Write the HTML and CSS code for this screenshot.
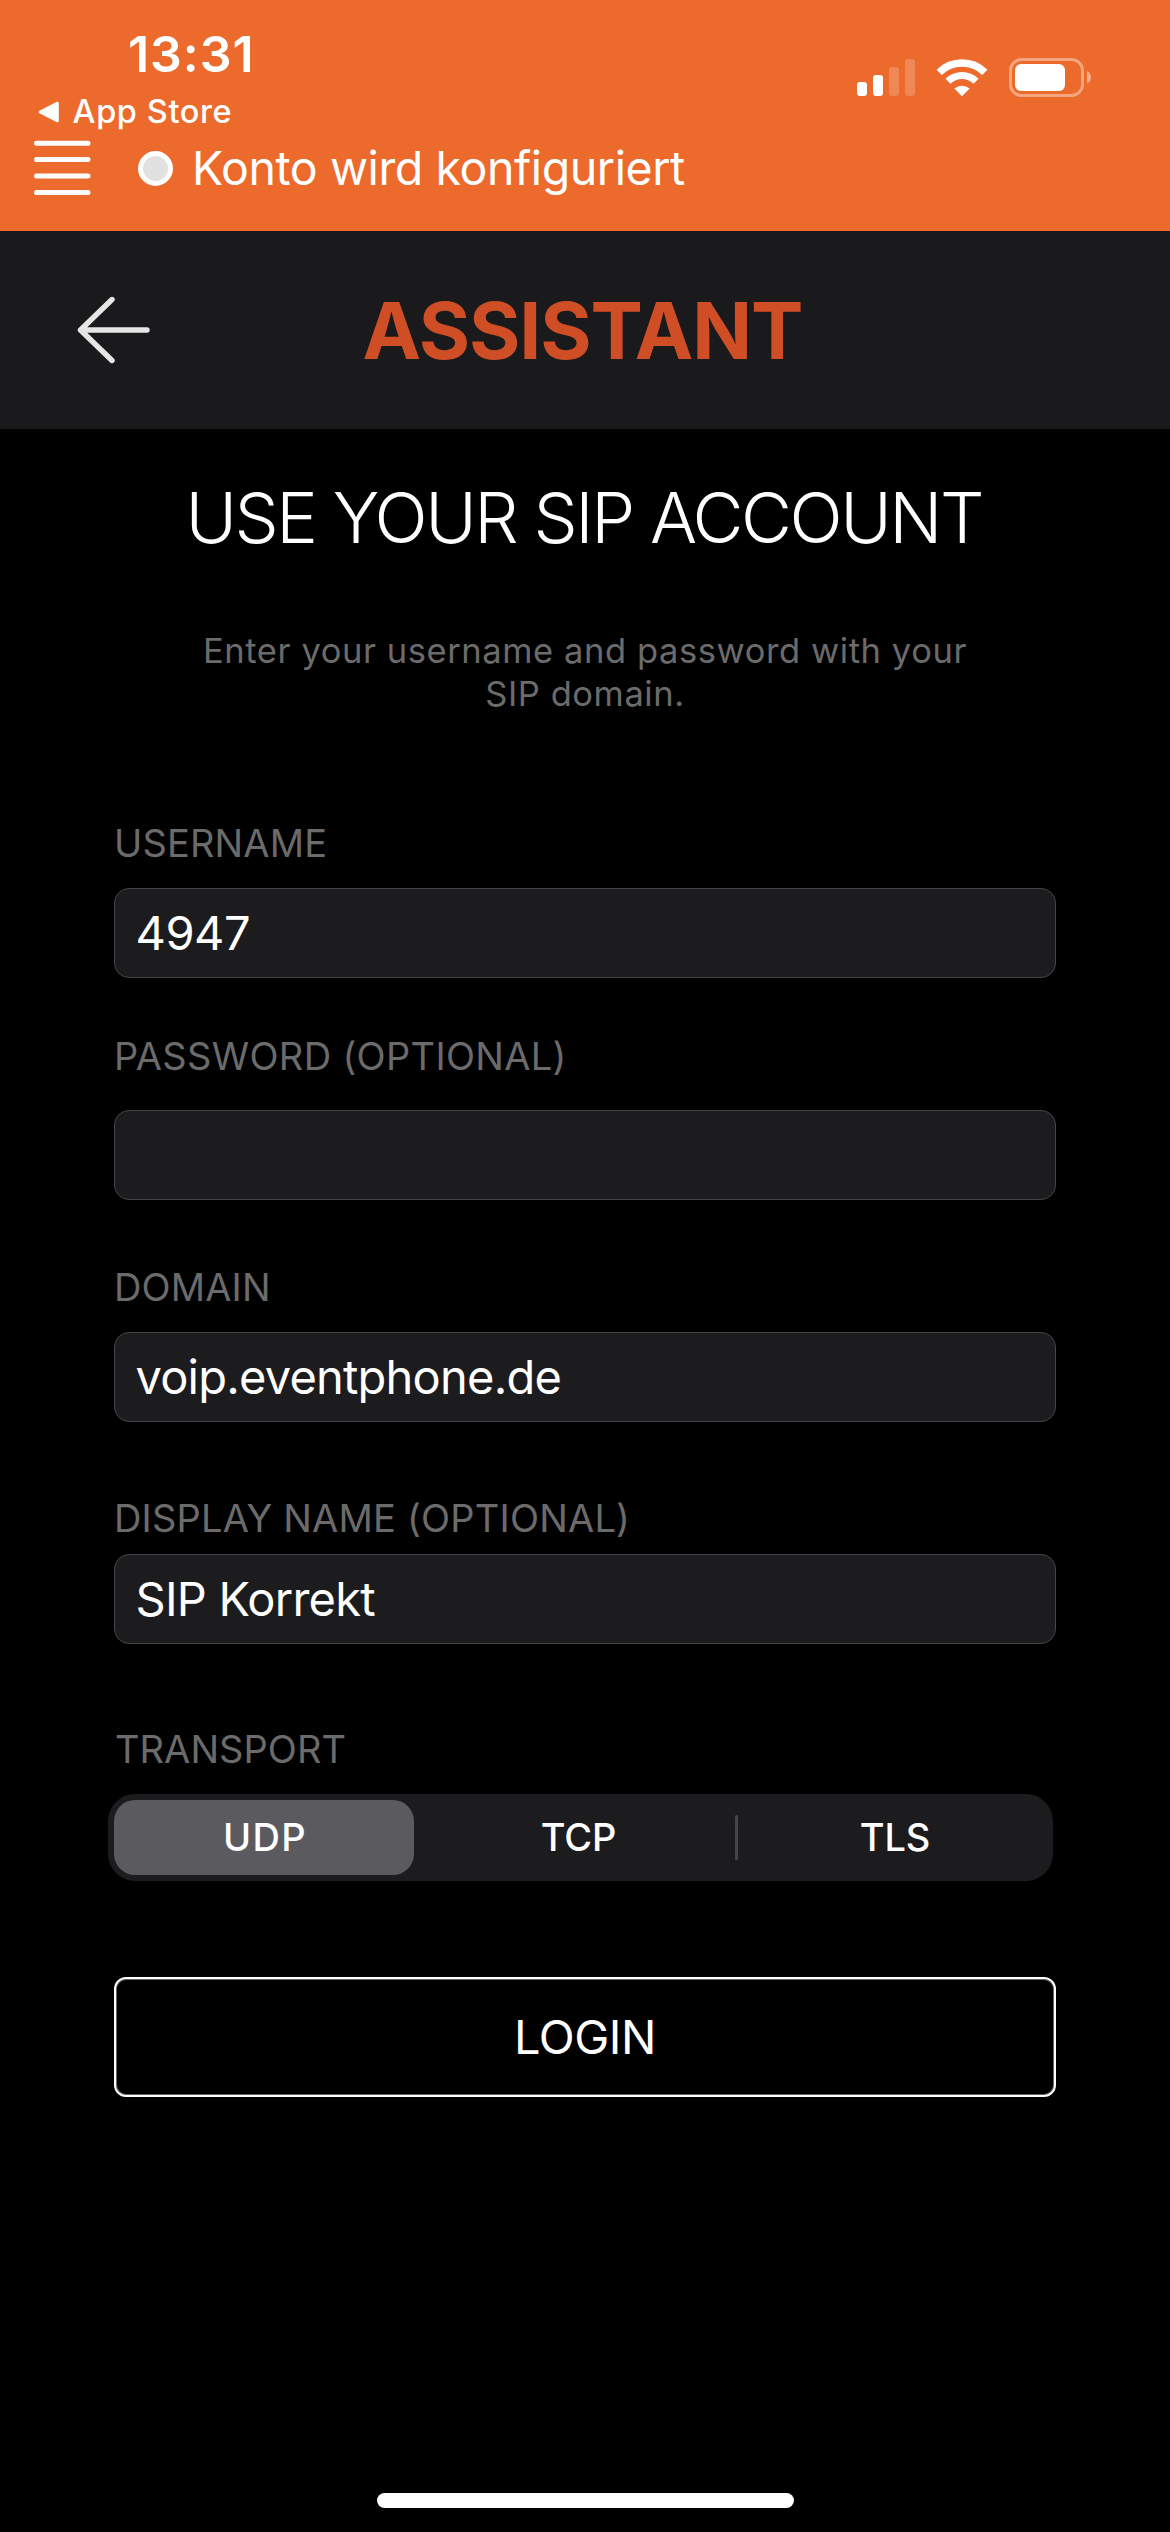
FILE: index.html
```html
<!DOCTYPE html>
<html lang="de">
<head>
<meta charset="utf-8">
<title>Assistant</title>
<link rel="stylesheet" href="styles.css">
</head>
<body>
<div class="screen">
  <header class="top">
    <div class="status">
      <div class="status-left">
        <div class="clock">13:31</div>
        <div class="back-app">
          <svg class="back-triangle" width="22" height="22" viewBox="0 0 22 22"><path d="M2 11 19.5 2V20Z" fill="#fff" stroke="#fff" stroke-width="2.6" stroke-linejoin="round"/></svg>
          <span>App Store</span>
        </div>
      </div>
      <div class="status-right">
        <svg width="58" height="37" viewBox="0 0 58 37" fill="#fff"><rect y="23" width="10" height="14" rx="3"/><rect x="16" y="16" width="10" height="21" rx="3"/><g opacity=".2"><rect x="32" y="8" width="10" height="29" rx="3"/><rect x="48" width="10" height="37" rx="3"/></g></svg>
        <svg class="wifi" width="52" height="38" viewBox="0 0 52 38" fill="none" stroke="#fff"><path d="M3.2 13.3A32.5 32.5 0 0 1 48.8 13.3" stroke-width="7.5"/><path d="M12 22.2A20 20 0 0 1 40 22.2" stroke-width="7.2"/><path d="M26 37.2 18.4 29.5A11.5 11.5 0 0 1 33.6 29.5Z" fill="#fff" stroke="none"/></svg>
        <svg width="82" height="39" viewBox="0 0 82 39"><rect x="1.5" y="1.5" width="72" height="36" rx="11" fill="none" stroke="#fff" stroke-opacity=".4" stroke-width="3"/><rect x="6" y="6" width="50" height="27" rx="6" fill="#fff"/><path d="M78 13.2C80.6 14.3 82 16.6 82 19.3S80.6 24.5 78 25.6Z" fill="#fff" fill-opacity=".45"/></svg>
      </div>
    </div>
    <div class="account">
      <svg class="menu" width="58" height="56" viewBox="0 0 58 56" stroke="#fff" stroke-width="5" stroke-linecap="round"><path d="M3.5 3.2H55M3.5 19.6H55M3.5 35.9H55M3.5 52.4H55"/></svg>
      <span class="dot"></span>
      <span class="account-text">Konto wird konfiguriert</span>
    </div>
  </header>
  <nav class="nav">
    <svg class="arrow" width="74" height="68" viewBox="0 0 74 68" fill="none" stroke="#e6e6e6" stroke-width="5.4" stroke-linecap="round" stroke-linejoin="round"><path d="M36 3.5 4.5 34 36 64.5M4.5 34H71"/></svg>
    <h1 class="title">ASSISTANT</h1>
  </nav>
  <main class="content">
    <h2 class="heading">USE YOUR SIP ACCOUNT</h2>
    <p class="intro">Enter your username and password with your<br>SIP domain.</p>
    <div class="form">
      <div class="label label-username">USERNAME</div>
      <div class="field field-number">4947</div>
      <div class="label label-password">PASSWORD (OPTIONAL)</div>
      <div class="field"></div>
      <div class="label label-domain">DOMAIN</div>
      <div class="field">voip.eventphone.de</div>
      <div class="label label-display">DISPLAY NAME (OPTIONAL)</div>
      <div class="field">SIP Korrekt</div>
      <div class="label label-transport">TRANSPORT</div>
      <div class="segments">
        <div class="segment selected">UDP</div>
        <div class="segment middle">TCP</div>
        <div class="divider"></div>
        <div class="segment last">TLS</div>
      </div>
      <div class="login">LOGIN</div>
    </div>
  </main>
  <div class="home-bar"></div>
</div>
</body>
</html>
```
FILE: styles.css
```css
* { box-sizing: border-box; }
body { margin: 0; background: #000; }
.screen {
  width: 1170px; height: 2532px;
  display: flex; flex-direction: column;
  background: #000; color: #fff;
  font-family: Inter, "Liberation Sans", sans-serif;
  overflow: hidden;
  white-space: nowrap;
}
svg { display: block; flex: none; }

.top { height: 231px; flex: none; background: #ec6a2c; }
.status { height: 138px; display: flex; justify-content: space-between; }
.status-left { padding: 24px 0 0 38px; }
.clock { padding-left: 90px; line-height: 60px; font-size: 50px; font-weight: 600; letter-spacing: 0.95px; }
.back-app { display: flex; align-items: center; margin-top: 7px; line-height: 41px; font-size: 32.5px; font-weight: 500; letter-spacing: 0.6px; }
.back-app span { margin-left: 12.5px; }
.status-right { display: flex; align-items: flex-start; padding: 58px 79px 0 0; }
.status-right svg:first-child { margin-top: 1px; }
.wifi { margin: 1px 21px 0; }
.account { display: flex; align-items: center; height: 60px; padding-left: 33px; }
.menu { margin-top: -1px; }
.dot { width: 35px; height: 35px; margin: 0 19px 0 47px; flex: none; border: 5px solid #fff; border-radius: 50%; background: #e1e1e1; }
.account-text { font-size: 46.5px; font-weight: 400; letter-spacing: -0.42px; line-height: 60px; }

.nav { height: 198px; flex: none; display: flex; align-items: center; padding-left: 76px; background: #1a1a1c; }
.title { margin: 1px 0 0 212.5px; font-size: 78.5px; line-height: 100px; font-weight: 700; letter-spacing: -1.13px; color: #d04e25; }

.content { flex: 1; }
.heading { margin: 49px 0 0 185.5px; font-size: 70px; line-height: 80px; font-weight: 300; letter-spacing: -2.45px; }
.intro { margin: 71px 0 0; font-size: 34.5px; line-height: 43px; letter-spacing: 0.58px; text-align: center; color: #6b6b6b; }
.form { width: 942px; margin: 108px 0 0 114px; }
.label { height: 40px; line-height: 40px; font-size: 38px; letter-spacing: 0.15px; color: #6b6b6b; }
.label-username { margin-bottom: 25px; }
.label-password { margin: 58px 0 34px; letter-spacing: 0.32px; }
.label-domain { margin: 67px 0 25px; }
.label-display { margin: 76px 0 16px; letter-spacing: 0.2px; }
.label-transport { margin: 85px 0 25px; padding-left: 1px; letter-spacing: 0.06px; }
.field { height: 90px; padding-left: 20.5px; border: 1px solid #464648; border-radius: 15px; background: #1c1c1e; font-size: 47px; line-height: 88px; letter-spacing: -0.78px; }
.field-number { letter-spacing: -0.46px; }
.segments { display: flex; align-items: center; width: 945px; height: 87px; margin-left: -6px; padding: 6px; border-radius: 27px; background: #1c1c1e; font-size: 38px; font-weight: 500; }
.segment { height: 75px; line-height: 75px; text-align: center; }
.selected { flex: 0 0 300px; margin-right: 8px; padding-left: 2px; border-radius: 21px; background: #5b5a5f; letter-spacing: 1.4px; }
.middle { flex: 0 0 313px; letter-spacing: -0.2px; }
.last { flex: 1; padding-left: 5px; letter-spacing: -0.15px; }
.divider { width: 3px; height: 45px; border-radius: 2px; background: #464649; }
.login { height: 120px; margin-top: 96px; border: 2px solid #fff; border-radius: 12px; box-shadow: inset 0 0 0 1px rgba(255, 255, 255, 0.4); text-align: center; font-size: 47px; line-height: 116px; letter-spacing: -0.47px; }
.home-bar { width: 417px; height: 15px; margin: 0 auto 24px; flex: none; border-radius: 8px; background: #fff; }
```
